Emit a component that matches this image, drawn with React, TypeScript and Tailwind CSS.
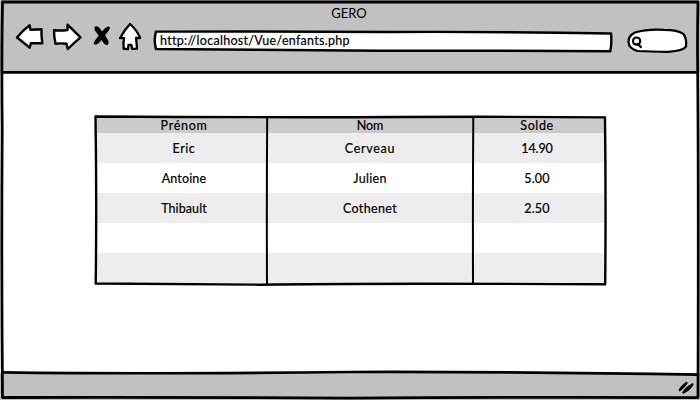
import React from "react";

type Row = [string, string, string];

const rows: Row[] = [
  ["Eric", "Cerveau", "14.90"],
  ["Antoine", "Julien", "5.00"],
  ["Thibault", "Cothenet", "2.50"],
  ["", "", ""],
  ["", "", ""],
];

const spacing: Record<string, string> = {
  Eric: "tracking-[0.55px]",
  Cerveau: "tracking-[0.7px]",
  "14.90": "tracking-[-0.1px]",
  Antoine: "tracking-[0.15px]",
  Julien: "tracking-[0.3px]",
  "5.00": "tracking-[0.15px]",
  Thibault: "tracking-[0.1px]",
  Cothenet: "tracking-[0.35px]",
  "2.50": "tracking-[0.2px]",
};

function Toolbar() {
  return (
    <div className="flex h-[32px] items-start pl-[14px]">
      <svg className="h-8 w-[34px] shrink-0" viewBox="14 22 34 32" fill="white" stroke="black" strokeWidth="2.4" strokeLinejoin="round">
        <path d="M17 37.5 Q22 31 29.6 25.2 L30.4 29.7 L41.5 29.3 Q41.2 36 42.3 43.2 L31 43.2 L29.6 47.7 Q23 42 17 37.5Z" />
      </svg>
      <svg className="ml-[3px] h-8 w-[34px] shrink-0" viewBox="51 22 34 32" fill="white" stroke="black" strokeWidth="2.4" strokeLinejoin="round">
        <path d="M54 30.2 Q60 31 67.5 30 L67.5 24.7 Q74 31 80.5 37.4 Q74 43 67.8 49 L66.5 43.8 Q61 43 55.5 43.8 Q54 37 54 30.2Z" />
      </svg>
      <svg className="ml-[6px] h-8 w-[22px] shrink-0" viewBox="91 22 22 32" fill="black">
        <path d="M94.5 26.8 Q97.5 25 100 28.5 L102 31.5 Q105 27.7 108 26.6 Q111 26.7 109.3 29.7 L105 35.3 L108.2 40.5 Q109.3 44.7 107 45 Q104.5 45.3 101.5 40 Q98 44.8 95 44.8 Q92.3 43.5 95 40.5 L98.7 35.5 L94.7 30.2Z" />
      </svg>
      <svg className="ml-[3px] h-8 w-[30px] shrink-0" viewBox="116 22 30 32" fill="white" stroke="black" strokeWidth="2.3" strokeLinejoin="round">
        <path d="M120 38.2 Q124 30.5 130 24 Q137 30 140.1 38 L136.1 38 Q136.6 43 137 48.7 L132.3 48.9 L131.3 44.8 L128.5 44.8 L128 49 L123.7 48.8 Q123 43 124 38.2Z" />
      </svg>
      <div className="ml-[7px] grid h-8 w-[461px] shrink-0">
        <svg className="col-start-1 row-start-1 h-8 w-[461px]" viewBox="153 22 461 32" fill="white" stroke="black" strokeWidth="2.4" strokeLinejoin="round">
          <path d="M156 31.6 Q280 31.2 390 32 Q500 31.5 611 33.5 Q612 42 610.3 51.3 Q500 50.4 380 50.8 Q270 50 156 49 Q153.5 40 156 31.6Z" />
        </svg>
        <span className="relative col-start-1 row-start-1 pl-[7px] pt-[10px] text-[12.5px] leading-[18px] tracking-[0.29px] [-webkit-text-stroke:0.2px_black]">
          http://localhost/Vue/enfants.php
        </span>
      </div>
      <svg className="ml-[12px] h-8 w-[64px] shrink-0" viewBox="626 22 64 32" fill="white" stroke="black" strokeWidth="2.2" strokeLinejoin="round">
        <path d="M635 32.5 Q647 28.8 664 29.8 Q678 29.8 683.5 34 Q687 39 686 46.5 Q684 50.5 668 51.8 Q651 51.5 638 51 Q629 49 628.5 42 Q628 36 635 32.5Z" />
        <circle cx="636.6" cy="41.1" r="3.6" strokeWidth="2.2" />
        <path d="M638 44 L640.8 47" fill="none" strokeWidth="2.4" strokeLinecap="round" />
      </svg>
    </div>
  );
}

function Table() {
  return (
    <div className="ml-[95px] mt-[43px] w-[511px] text-center text-[12.5px] [-webkit-text-stroke:0.2px_black]">
      <div className="grid h-[17px] grid-cols-[172px_206px_133px] bg-[#cbcbcb] leading-[19px]">
        <span className="pl-[6px] tracking-[0.7px]">Prénom</span>
        <span className="tracking-[0px]">Nom</span>
        <span className="pr-[5px] tracking-[0.6px]">Solde</span>
      </div>
      {rows.map((row, i) => (
        <div
          key={i}
          className={`grid h-[30px] grid-cols-[172px_206px_133px] leading-[32px] ${i % 2 === 0 ? "bg-[#ededed]" : "bg-white"}`}
        >
          {row.map((cell, j) => (
            <span key={j} className={`${spacing[cell] ?? ""} ${j === 0 ? "pl-[6px]" : j === 2 ? "pr-[5px]" : ""}`}>
              {cell}
            </span>
          ))}
        </div>
      ))}
    </div>
  );
}

function SketchLines() {
  return (
    <svg className="pointer-events-none absolute inset-0 h-[400px] w-[700px]" viewBox="0 0 700 400" fill="none" stroke="black" strokeLinejoin="round">
      <path d="M2.5 2 L698 2 Q697.2 40 697.7 70 Q698.7 190 698 397.6 Q500 397 350 398.2 Q170 397 2.5 397.5 Q1.3 260 2.2 130 Q1.4 60 2.5 2Z" strokeWidth="2.8" />
      <path d="M2 72.4 Q300 73.2 698 72.3" strokeWidth="2.7" />
      <path d="M2 372.3 Q150 374.3 350 372 Q530 371.6 698 374.7" strokeWidth="2.7" />
      <path d="M95.5 116.5 Q270 117.6 400 117 Q520 116.5 605 117.4 Q606 200 605.2 284.3 Q360 283 260 284.7 Q180 284.2 95.7 283.5 Q96.8 200 95.5 116.5Z" strokeWidth="2.4" />
      <path d="M267.2 118 Q266.6 200 267 284 M473.3 117 Q472.7 200 473 284" strokeWidth="2" />
    </svg>
  );
}

export default function App() {
  return (
    <div className="relative flex h-[400px] w-[700px] flex-col overflow-hidden bg-white font-['Lato',sans-serif] text-black">
      <header className="h-[73px] shrink-0 bg-[#c1c1c1]">
        <div className="h-[22px] pr-[2px] pt-[4px] text-center text-[13px] leading-[18px]">GERO</div>
        <Toolbar />
      </header>
      <main className="h-[300px] shrink-0">
        <Table />
      </main>
      <footer className="flex h-[27px] justify-end bg-[#c1c1c1] pr-[5px] pt-[7px]">
        <svg className="h-4 w-[18px]" viewBox="677 380 18 16" fill="black" stroke="black" strokeLinejoin="round">
          <path d="M679.2 389.5 Q682 384.5 686.8 382 L687 383.5 Q684.5 388 679.5 391Z M682.5 392.5 Q685.5 387 692.7 383.5 L693 385 Q690 390.5 683.2 393.3Z" />
        </svg>
      </footer>
      <SketchLines />
    </div>
  );
}
